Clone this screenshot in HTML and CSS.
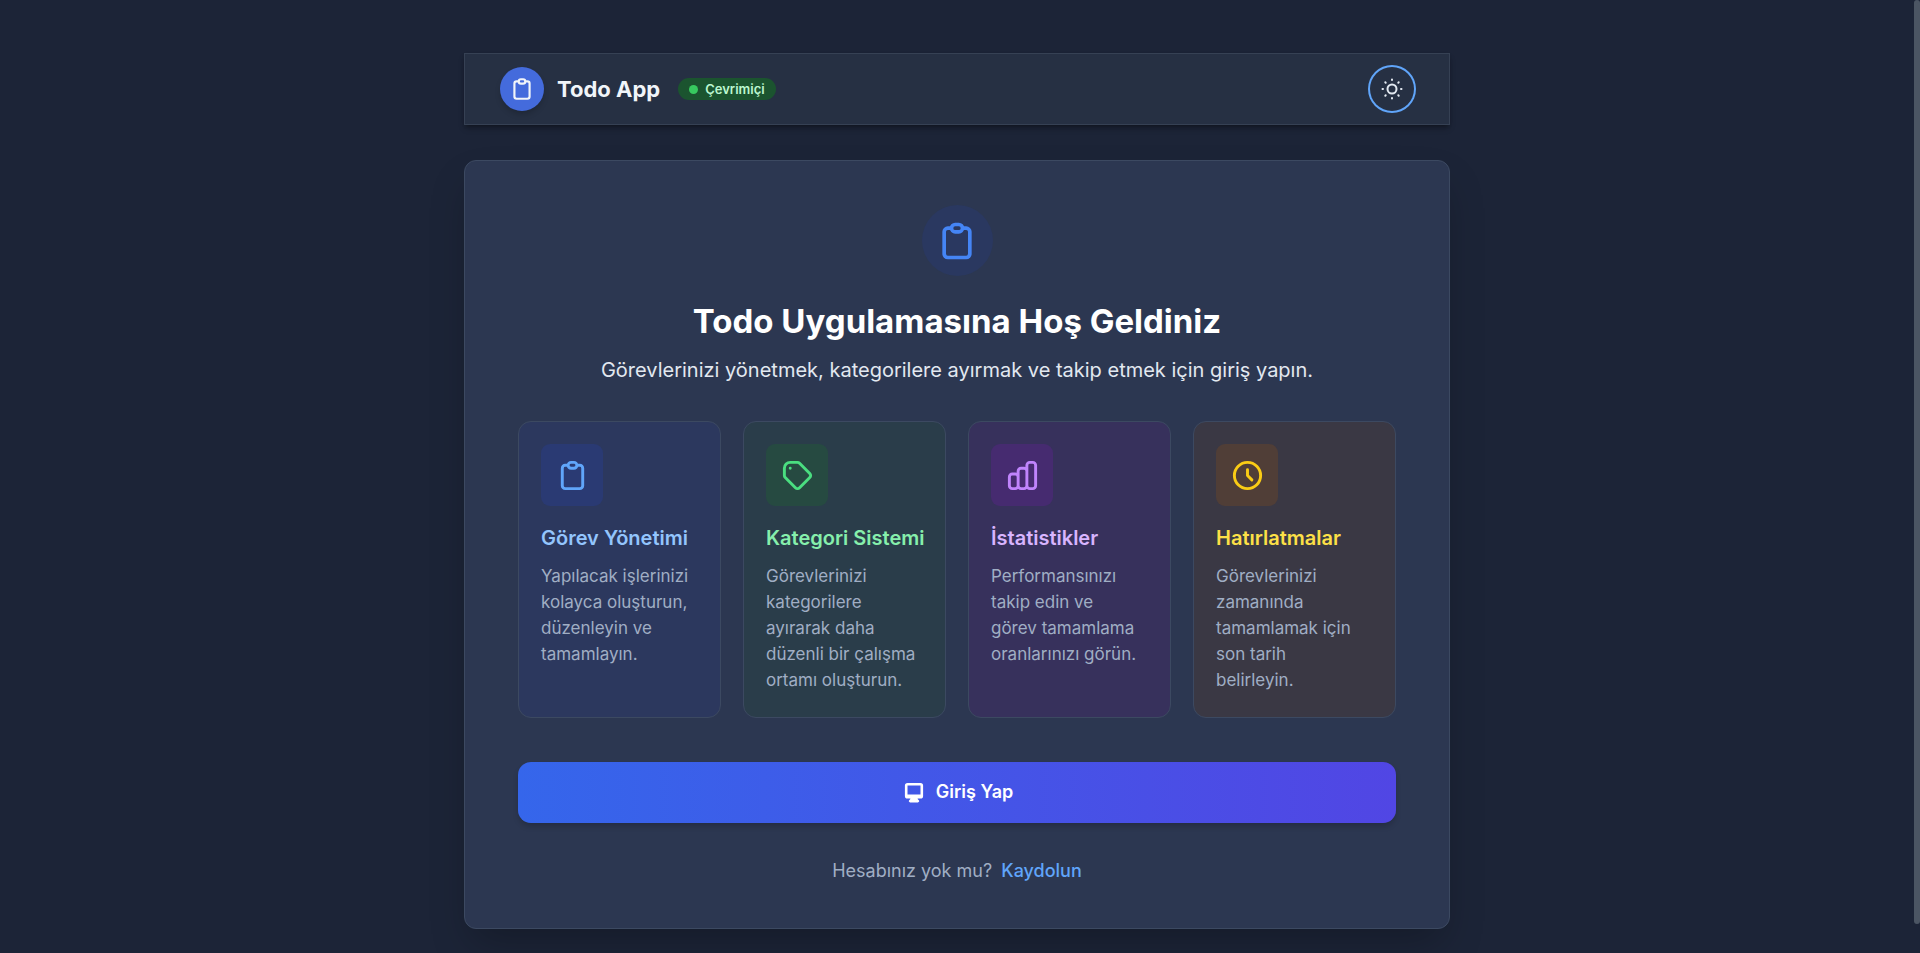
FILE: index.html
```html
<!DOCTYPE html>
<html lang="tr">
<head>
<meta charset="utf-8">
<meta name="viewport" content="width=device-width, initial-scale=1">
<title>Todo App</title>
<link rel="stylesheet" href="styles.css">
</head>
<body>
<svg class="sprite" aria-hidden="true">
  <symbol id="clipboard" viewBox="0 0 24 24"><path d="M9 5H7a2 2 0 00-2 2v12a2 2 0 002 2h10a2 2 0 002-2V7a2 2 0 00-2-2h-2M9 5a2 2 0 002 2h2a2 2 0 002-2M9 5a2 2 0 012-2h2a2 2 0 012 2"/></symbol>
</svg>
<div class="page">
  <header class="topbar">
    <div class="brand">
      <span class="brand-logo"><svg class="icon icon-sm"><use href="#clipboard"/></svg></span>
      <span class="brand-name">Todo App</span>
      <span class="status"><span class="status-dot"></span>Çevrimiçi</span>
    </div>
    <button class="theme-toggle" type="button" aria-label="Temayı değiştir">
      <svg class="icon icon-sun" viewBox="0 0 24 24"><circle cx="12" cy="12" r="4.500"/><path d="M12 2.500v.5M12 21v.5M2.500 12h.5M21 12h.5M5.300 5.300l.4.4M18.300 18.300l.4.4M18.700 5.300l-.4.4M5.700 18.300l-.4.4"/></svg>
    </button>
  </header>
  <main class="welcome">
    <div class="hero-icon"><svg class="icon icon-lg"><use href="#clipboard"/></svg></div>
    <h1 class="title">Todo Uygulamasına Hoş Geldiniz</h1>
    <p class="subtitle">Görevlerinizi yönetmek, kategorilere ayırmak ve takip etmek için giriş yapın.</p>
    <section class="features">
      <article class="feature blue">
        <div class="tile"><svg class="icon icon-md"><use href="#clipboard"/></svg></div>
        <h2>Görev Yönetimi</h2>
        <p>Yapılacak işlerinizi kolayca oluşturun, düzenleyin ve tamamlayın.</p>
      </article>
      <article class="feature green">
        <div class="tile"><svg class="icon icon-md" viewBox="0 0 24 24"><path d="M7 7h.01M7 3h5c.512 0 1.024.195 1.414.586l7 7a2 2 0 010 2.828l-7 7a2 2 0 01-2.828 0l-7-7A1.994 1.994 0 013 12V7a4 4 0 014-4z"/></svg></div>
        <h2>Kategori Sistemi</h2>
        <p>Görevlerinizi kategorilere ayırarak daha düzenli bir çalışma ortamı oluşturun.</p>
      </article>
      <article class="feature purple">
        <div class="tile"><svg class="icon icon-md" viewBox="0 0 24 24"><path d="M9 19v-6a2 2 0 00-2-2H5a2 2 0 00-2 2v6a2 2 0 002 2h2a2 2 0 002-2zm0 0V9a2 2 0 012-2h2a2 2 0 012 2v10m-6 0a2 2 0 002 2h2a2 2 0 002-2m0 0V5a2 2 0 012-2h2a2 2 0 012 2v14a2 2 0 01-2 2h-2a2 2 0 01-2-2z"/></svg></div>
        <h2>İstatistikler</h2>
        <p>Performansınızı takip edin ve görev tamamlama oranlarınızı görün.</p>
      </article>
      <article class="feature yellow">
        <div class="tile"><svg class="icon icon-md" viewBox="0 0 24 24"><path d="M12 8v4l3 3m6-3a9 9 0 11-18 0 9 9 0 0118 0z"/></svg></div>
        <h2>Hatırlatmalar</h2>
        <p>Görevlerinizi zamanında tamamlamak için son tarih belirleyin.</p>
      </article>
    </section>
    <button class="login" type="button">
      <svg class="icon-login" viewBox="0 0 20 20"><path fill-rule="evenodd" d="M3 5a2 2 0 012-2h10a2 2 0 012 2v8a2 2 0 01-2 2h-2.220l.123.489.804.804A1 1 0 0113 18H7a1 1 0 01-.707-1.707l.804-.804L7.220 15H5a2 2 0 01-2-2V5zm2 0v7h10V5H5z" clip-rule="evenodd"/></svg>
      Giriş Yap
    </button>
    <p class="signup">Hesabınız yok mu? <a href="#kaydol">Kaydolun</a></p>
  </main>
</div>
<div class="scroll-track" aria-hidden="true"><div class="scroll-thumb"></div></div>
</body>
</html>
```
FILE: styles.css
```css
* { box-sizing: border-box; }

html {
  background: #1c2437;
  scrollbar-width: none;
}

body {
  margin: 0;
  padding-right: 6px;
  color: #f1f5f9;
  font-family: Inter, "Noto Sans", sans-serif;
  font-size: 17px;
  line-height: 26px;
}

h1, h2, p { margin: 0; }

.sprite { display: none; }

.page {
  display: flex;
  flex-direction: column;
  gap: 35px;
  max-width: 1056px;
  margin: 0 auto;
  padding: 53px 35px;
}

/* Slim scroll indicator along the right edge of the window */
.scroll-track {
  position: fixed;
  top: 0;
  right: 0;
  bottom: 0;
  width: 6px;
}
.scroll-thumb {
  height: 97%;
  border-radius: 3px;
  background: #4b5563;
}

.icon {
  display: block;
  fill: none;
  stroke: currentColor;
  stroke-width: 2;
  stroke-linecap: round;
  stroke-linejoin: round;
}
.icon-sm { width: 26px; height: 26px; }
.icon-sun { width: 24px; height: 24px; }
.icon-md { width: 35px; height: 35px; }
.icon-lg { width: 44px; height: 44px; }

.topbar {
  display: flex;
  align-items: center;
  justify-content: space-between;
  padding: 13px 35px;
  background: #263043;
  border: 1px solid #364154;
  box-shadow: 0 4px 6px -1px rgba(0, 0, 0, .3), 0 2px 4px -2px rgba(0, 0, 0, .3);
}

.brand { display: flex; align-items: center; }

.brand-logo {
  display: grid;
  place-items: center;
  width: 44px;
  height: 44px;
  margin-right: 13px;
  border-radius: 50%;
  background: #446bdc;
  box-shadow: 0 4px 6px -1px rgba(0, 0, 0, .2);
}

.brand-name {
  margin-right: 18px;
  font-size: 22px;
  font-weight: 700;
}

.status {
  display: inline-flex;
  align-items: center;
  gap: 7px;
  padding: 2px 11px;
  border-radius: 11px;
  background: #1b542f;
  color: #bbf7d0;
  font-size: 13px;
  font-weight: 600;
  line-height: 18px;
}

.status-dot {
  width: 9px;
  height: 9px;
  border-radius: 50%;
  background: #37c95f;
}

.theme-toggle {
  display: grid;
  place-items: center;
  width: 44px;
  height: 44px;
  padding: 0;
  border: 0;
  border-radius: 50%;
  background: #263043;
  color: #e2e8f0;
  box-shadow: 0 0 0 2px #60a5fa;
  cursor: pointer;
}

.welcome {
  padding: 44px 53px;
  border: 1px solid #3c4961;
  border-radius: 12px;
  background: #2c3751;
  box-shadow: 0 20px 40px -8px rgba(0, 0, 0, .25);
  text-align: center;
}

.hero-icon {
  display: grid;
  place-items: center;
  width: 71px;
  height: 71px;
  margin: 0 auto 25px;
  border-radius: 50%;
  background: #2a3860;
  color: #4585f5;
}

.title {
  margin-bottom: 14px;
  color: #fff;
  font-size: 33px;
  font-weight: 700;
  line-height: 40px;
}

.subtitle {
  margin-bottom: 35px;
  color: #e2e8f0;
  font-size: 20px;
  font-weight: 400;
  line-height: 31px;
}

.features {
  display: grid;
  grid-template-columns: repeat(4, minmax(0, 1fr));
  gap: 22px;
  margin-bottom: 44px;
  text-align: left;
}

.feature {
  padding: 22px 22px 24px;
  border: 1px solid #3c4961;
  border-radius: 13px;
  color: #a0aec4;
}

.tile {
  display: grid;
  place-items: center;
  width: 62px;
  height: 62px;
  margin-bottom: 18px;
  border-radius: 9px;
}

.feature h2 {
  margin-bottom: 11px;
  font-size: 20px;
  font-weight: 600;
  line-height: 28px;
  white-space: nowrap;
}

.feature p { padding-right: 6px; }

.blue { background: #2c385e; }
.blue .tile { background: #2a3a73; color: #60a5fa; }
.blue h2 { color: #93c5fd; }
.green { background: #2a3d4a; }
.green .tile { background: #264a41; color: #4ade80; }
.green h2 { color: #86efac; }
.purple { background: #37315c; }
.purple .tile { background: #462b70; color: #c084fc; }
.purple h2 { color: #d8b4fe; }
.yellow { background: #3a3844; }
.yellow .tile { background: #503e37; color: #facc15; }
.yellow h2 { color: #fde047; }

.login {
  display: flex;
  align-items: center;
  justify-content: center;
  gap: 9px;
  width: 100%;
  margin-bottom: 35px;
  padding: 17px 22px 18px;
  border: 0;
  border-radius: 13px;
  background: linear-gradient(to right, #3566eb, #5146e4);
  box-shadow: 0 4px 6px -1px rgba(0, 0, 0, .2);
  color: #fff;
  font: 600 18px/26px Inter, "Noto Sans", sans-serif;
  cursor: pointer;
}

.icon-login { width: 26px; height: 26px; fill: currentColor; }

.signup {
  color: #a0aec4;
  font-size: 18px;
}

.signup a {
  margin-left: 4px;
  color: #60a5fa;
  font-weight: 500;
  text-decoration: none;
}
```
